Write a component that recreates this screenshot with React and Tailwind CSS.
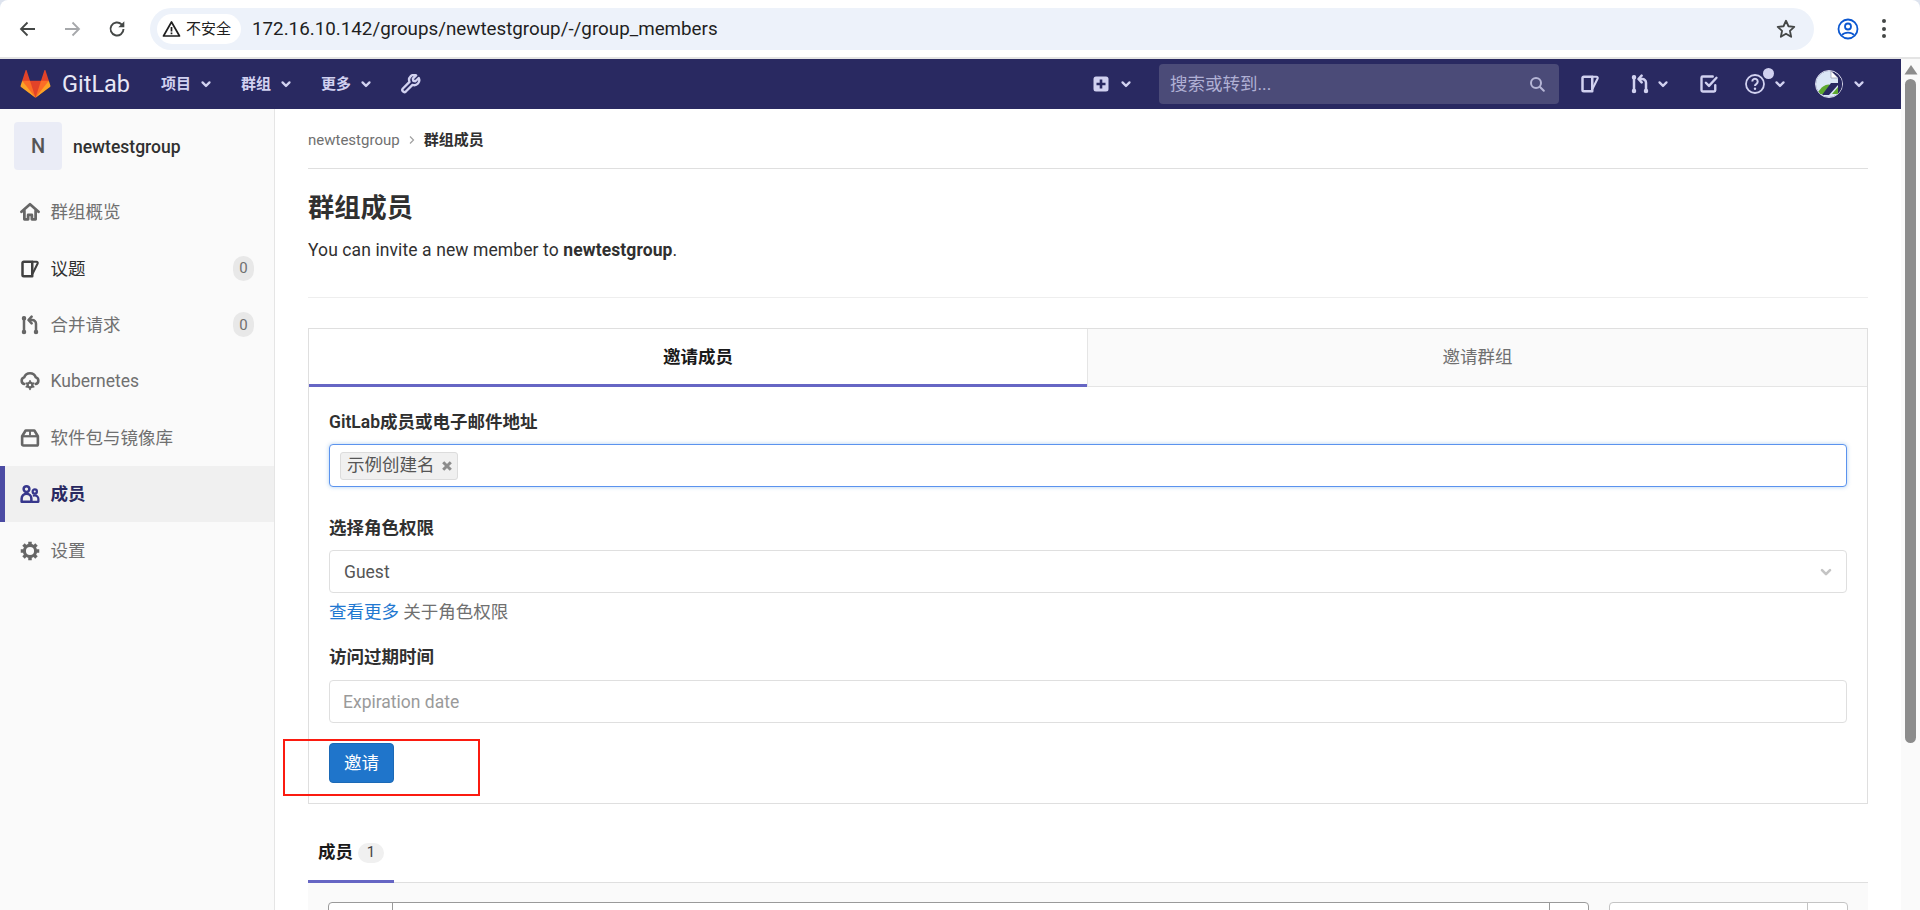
import React from "react";

const FONT = "font-['Roboto','Noto_Sans_CJK_SC',sans-serif]";

function Chevron({ className = "", size = 16 }) {
  return (
    <svg width={size} height={size} viewBox="0 0 16 16" className={className} fill="none" stroke="currentColor" strokeWidth="2.6" strokeLinecap="round" strokeLinejoin="round">
      <path d="M4 6.200 8 10.200 12 6.200" />
    </svg>
  );
}

function Tanuki() {
  return (
    <svg width="31" height="30" viewBox="0 0 36 36">
      <path fill="#e24329" d="M2 14l9.380 9v-9l-4-12.280c-.205-.632-1.176-.632-1.380 0z" />
      <path fill="#e24329" d="M34 14l-9.380 9v-9l4-12.280c.205-.632 1.176-.632 1.380 0z" />
      <path fill="#e24329" d="M18,34.380 3,14 33,14 Z" />
      <path fill="#fc6d26" d="M18,34.380 11.380,14 2,14 6,25Z" />
      <path fill="#fc6d26" d="M18,34.380 24.620,14 34,14 30,25Z" />
      <path fill="#fca326" d="M2 14L.1 20.160c-.18.565 0 1.200.5 1.560l17.420 12.660z" />
      <path fill="#fca326" d="M34 14l1.900 6.160c.18.565 0 1.200-.5 1.560L18 34.380z" />
    </svg>
  );
}

function IssuesIcon({ size = 20, className = "" }) {
  return (
    <svg width={size} height={size} viewBox="0 0 16 16" className={className} fill="none" stroke="currentColor" strokeWidth="2" strokeLinejoin="round" strokeLinecap="round">
      <path d="M3 2.200h6.800v11.600H3a1 1 0 0 1-1-1V3.200a1 1 0 0 1 1-1z" />
      <path d="M10 2.200h3.200a1 1 0 0 1 .9 1.400L10.200 11.500" strokeWidth="1.700" />
    </svg>
  );
}

function MergeIcon({ size = 20, className = "" }) {
  return (
    <svg width={size} height={size} viewBox="0 0 16 16" className={className} fill="none" stroke="currentColor" strokeWidth="2" strokeLinecap="round" strokeLinejoin="round">
      <circle cx="3.200" cy="2.500" r="1.300" fill="currentColor" strokeWidth="1" />
      <circle cx="3.200" cy="13.500" r="1.300" fill="currentColor" strokeWidth="1" />
      <circle cx="12.800" cy="13.500" r="1.300" fill="currentColor" strokeWidth="1" />
      <path d="M3.200 3v10" />
      <path d="M12.800 13V7A3 3 0 0 0 9.800 4H7.500" />
      <path d="M9.300 1.300 6.800 4l2.500 2.700" />
    </svg>
  );
}

function HomeIcon() {
  return (
    <svg width="20" height="20" viewBox="0 0 16 16" fill="none" stroke="currentColor" strokeWidth="2.200" strokeLinejoin="round" strokeLinecap="round">
      <path d="M1.200 7.800 8 1.800l6.800 6" />
      <path d="M3.500 7V13.800h3V10.300h3v3.500h3V7" />
    </svg>
  );
}

function KubeIcon() {
  return (
    <svg width="20" height="20" viewBox="0 0 16 16" fill="none" stroke="currentColor" strokeWidth="2.100" strokeLinejoin="round" strokeLinecap="round">
      <path d="M3.400 10.400A2.800 2.800 0 0 1 3.400 5 4.900 4.900 0 0 1 12.600 5a2.800 2.800 0 0 1 0 5.400" />
      <circle cx="8" cy="11.200" r="1.900" strokeWidth="1.900" />
      <path d="M8 7.800v1M8 13.600v1M5 9.700l.8.5M10.200 12.200l.8.5M5 12.700l.8-.5M10.200 10.200l.8-.5" strokeWidth="1.400" />
    </svg>
  );
}

function PackageIcon() {
  return (
    <svg width="20" height="20" viewBox="0 0 16 16" fill="none" stroke="currentColor" strokeWidth="2.100" strokeLinejoin="round">
      <path d="M4.500 2h7l2.800 4.600V13a1 1 0 0 1-1 1H2.700a1 1 0 0 1-1-1V6.600z" />
      <path d="M1.900 6.600h12.200" strokeWidth="1.800" />
      <path d="M8 2v4" strokeWidth="1.500" />
    </svg>
  );
}

function MembersIcon() {
  return (
    <svg width="20" height="20" viewBox="0 0 16 16" fill="none" stroke="currentColor" strokeWidth="2" strokeLinejoin="round">
      <circle cx="5.200" cy="4" r="2.300" />
      <circle cx="11.800" cy="6" r="1.700" strokeWidth="1.800" />
      <path d="M1.300 14.200v-2.500a3.900 3.900 0 0 1 7.800 0v2.500z" />
      <path d="M10.300 9.400c.5-.2 1-.3 1.500-.3a2.900 2.900 0 0 1 2.900 2.900v2.200H9.500" strokeWidth="1.800" />
    </svg>
  );
}

function GearIcon() {
  return (
    <svg width="20" height="20" viewBox="0 0 16 16" fill="none" stroke="currentColor">
      <circle cx="8" cy="8" r="4.500" strokeWidth="2.500" />
      <path d="M8 .6v2.400M8 13v2.400M.6 8H3M13 8h2.400M2.800 2.800l1.700 1.700M11.500 11.500l1.700 1.700M2.800 13.200l1.700-1.700M11.500 4.500l1.700-1.700" strokeWidth="2.800" />
    </svg>
  );
}

function SideItem({ icon, label, badge, active, hover }) {
  const tone = active
    ? "bg-[#f0f0f0] border-l-[5px] border-[#4b4ba3] pl-[15px] text-[#292961] font-bold"
    : hover
      ? "pl-[20px] text-[#303030]"
      : "pl-[20px] text-[#707070]";
  const iconTone = active ? "text-[#37378c]" : hover ? "text-[#404040]" : "text-[#666666]";
  return (
    <div className={`h-[56.400px] flex items-center pr-[20px] ${tone}`}>
      <span className={`w-[20px] h-[20px] flex ${iconTone}`}>{icon}</span>
      <span className="ml-[10.500px] text-[17.500px] leading-[24px]">{label}</span>
      {badge !== undefined && (
        <span className="ml-auto w-[21px] h-[25px] rounded-full bg-[#e8e8e8] text-[#707070] text-[15px] flex items-center justify-center">{badge}</span>
      )}
    </div>
  );
}

function Sidebar() {
  return (
    <aside className="w-[275px] shrink-0 bg-[#fafafa] border-r border-[#e5e5e5] h-[801px]">
      <div className="h-[75px] pl-[14px] pt-[13px] flex items-start">
        <div className="w-[48px] h-[48px] rounded-[4px] bg-[#eaecf6] text-[#555555] text-[20px] font-medium flex items-center justify-center">N</div>
        <div className="ml-[11px] mt-[13px] text-[17.500px] leading-[24px] font-medium text-[#303030]">newtestgroup</div>
      </div>
      <div>
        <SideItem icon={<HomeIcon />} label="群组概览" />
        <SideItem icon={<IssuesIcon />} label="议题" badge="0" hover />
        <SideItem icon={<MergeIcon />} label="合并请求" badge="0" />
        <SideItem icon={<KubeIcon />} label="Kubernetes" />
        <SideItem icon={<PackageIcon />} label="软件包与镜像库" />
        <SideItem icon={<MembersIcon />} label="成员" active />
        <SideItem icon={<GearIcon />} label="设置" />
      </div>
    </aside>
  );
}

function BrowserBar() {
  return (
    <div className="h-[59px] bg-white border-b-2 border-[#e4e4e4] flex items-start relative rounded-t-[8px]">
      <div className="w-[150px] h-[58px] flex items-center text-[#444746]">
        <svg width="20" height="20" viewBox="0 0 20 20" className="ml-[18px]" fill="none" stroke="currentColor" strokeWidth="1.800"><path d="M17 10H3.500M9.500 3.500 3 10l6.500 6.500" /></svg>
        <svg width="20" height="20" viewBox="0 0 20 20" className="ml-[24px] text-[#a6a8ab]" fill="none" stroke="currentColor" strokeWidth="1.800"><path d="M3 10h13.500M10.500 3.500 17 10l-6.500 6.500" /></svg>
        <svg width="20" height="20" viewBox="0 0 20 20" className="ml-[25px]" fill="none" stroke="currentColor" strokeWidth="1.900"><path d="M16.500 10a6.500 6.500 0 1 1-1.900-4.600L16.500 7.300" /><path d="M17.300 2.300v6h-6z" fill="currentColor" stroke="none" /></svg>
      </div>
      <div className="mt-[8px] w-[1664px] h-[42px] rounded-full bg-[#edf2fa] flex items-center pl-[7px] relative">
        <div className="w-[84px] h-[30px] rounded-full bg-white flex items-center pl-[5px] text-[#1f1f1f]">
          <svg width="19" height="18" viewBox="0 0 19 18" fill="none" stroke="currentColor" strokeWidth="1.700" strokeLinejoin="round"><path d="M9.500 2 17.500 16H1.500z" /><path d="M9.500 7v4.500M9.500 12.500v1.700" /></svg>
          <span className="ml-[5px] text-[15px] leading-[20px]">不安全</span>
        </div>
        <div className="ml-[11px] text-[18.800px] text-[#1f1f1f] leading-[24px]">172.16.10.142/groups/newtestgroup/-/group_members</div>
        <svg width="22" height="22" viewBox="0 0 24 24" className="absolute right-[17px] top-[10px] text-[#444746]" fill="none" stroke="currentColor" strokeWidth="2" strokeLinejoin="round"><path d="M12 3l2.700 6 6.300.7-4.700 4.300 1.300 6.500L12 17.200 6.400 20.500 7.700 14 3 9.700 9.300 9z" /></svg>
      </div>
      <svg width="22" height="22" viewBox="0 0 22 22" className="ml-[23px] mt-[18px] text-[#0b57d0]" fill="none" stroke="currentColor" strokeWidth="1.800"><circle cx="11" cy="11" r="9.500" /><circle cx="11" cy="8.500" r="3" /><path d="M5 17a7 5 0 0 1 12 0" /></svg>
      <div className="ml-[23px] mt-[19px] flex flex-col gap-[3.500px]">
        <span className="w-[4px] h-[4px] rounded-full bg-[#444746]" />
        <span className="w-[4px] h-[4px] rounded-full bg-[#444746]" />
        <span className="w-[4px] h-[4px] rounded-full bg-[#444746]" />
      </div>
    </div>
  );
}

function NavMenu({ label, className = "" }) {
  return (
    <div className={`flex items-center text-[#d1d1f0] ${className}`}>
      <span className="w-[30px] whitespace-nowrap text-[15px] font-bold leading-[20px]">{label}</span>
      <Chevron className="ml-[8px]" size={14} />
    </div>
  );
}

function TopNav() {
  return (
    <div className="h-[50px] bg-[#292961] flex items-center text-[#d1d1f0]">
      <div className="ml-[20px] flex items-center">
        <Tanuki />
        <span className="ml-[11px] w-[64px] text-[23.500px] leading-[28px] text-[#e8e8f6]">GitLab</span>
      </div>
      <NavMenu label="项目" className="ml-[35px]" />
      <NavMenu label="群组" className="ml-[28px]" />
      <NavMenu label="更多" className="ml-[28px]" />
      <svg width="20" height="20" viewBox="0 0 16 16" className="ml-[28px]" fill="none" stroke="currentColor" strokeWidth="1.900" strokeLinejoin="round"><path d="M14.200 3.200 11.500 5.800 9.800 5.400 9.500 3.700 12.100 1.100A4 4 0 0 0 6.800 6.300L1.500 11.600a1.700 1.700 0 0 0 2.400 2.400L9.200 8.700a4 4 0 0 0 5-5.500z" /></svg>

      <svg width="16" height="16" viewBox="0 0 16 16" className="ml-[672px]"><rect x="0.500" y="0.500" width="15" height="15" rx="2.500" fill="#d1d1f0" /><path d="M8 3.500v9M3.500 8h9" stroke="#292961" strokeWidth="2.600" /></svg>
      <Chevron className="ml-[10px]" size={14} />
      <div className="ml-[26px] w-[400px] h-[40px] rounded-[4px] bg-[#4b4b78] flex items-center pl-[11px] pr-[14px]">
        <span className="text-[17.500px] text-[#b0b0d4] leading-[24px]">搜索或转到...</span>
        <svg width="16" height="16" viewBox="0 0 16 16" className="ml-auto text-[#b6b6d6]" fill="none" stroke="currentColor" strokeWidth="2"><circle cx="7" cy="7" r="5" /><path d="M11 11l3.800 3.800" strokeLinecap="round" /></svg>
      </div>
      <IssuesIcon className="ml-[21px]" size={20} />
      <MergeIcon className="ml-[30px]" size={20} />
      <Chevron className="ml-[6px]" size={14} />
      <svg width="20" height="20" viewBox="0 0 16 16" className="ml-[29px]" fill="none" stroke="currentColor" strokeWidth="1.900" strokeLinecap="round" strokeLinejoin="round"><path d="M13 9v4a1 1 0 0 1-1 1H3a1 1 0 0 1-1-1V3a1 1 0 0 1 1-1h8" /><path d="M5.500 7 8 9.500 14 3" /></svg>
      <div className="relative ml-[26px] w-[20px] h-[20px]">
        <svg width="20" height="20" viewBox="0 0 20 20" fill="none" stroke="currentColor" strokeWidth="1.800"><circle cx="10" cy="10" r="9" /><path d="M7.300 7.500a2.700 2.700 0 1 1 4.200 2.300c-1 .6-1.500 1.100-1.500 2.200" strokeWidth="2" /><circle cx="10" cy="14.800" r="1.200" fill="currentColor" stroke="none" /></svg>
        <span className="absolute w-[11px] h-[11px] rounded-full bg-[#d1d1f0] left-[18px] top-[-6px]" />
      </div>
      <Chevron className="ml-[8px]" size={14} />
      <div className="ml-[28px] w-[28px] h-[28px] rounded-full border border-[#dcdcee] overflow-hidden">
        <svg width="26" height="26" viewBox="0 0 26 26" className="block">
          <path d="M0 0h15l7 7v19H0z" fill="#dbe7f6" />
          <path d="M15 0v7h7z" fill="#ffffff" stroke="#8a8aa0" strokeWidth="0.600" />
          <path d="M2 21C6 15 11 12 15 14l-6 9H2z" fill="#5ea92f" />
          <path d="M16 23l6-7v7z" fill="#5ea92f" />
          <path d="M15 12h7v2L13 24H6z" fill="#292961" />
          <path d="M22 7h4v19h-4z" fill="#292961" />
        </svg>
      </div>
      <Chevron className="ml-[9px]" size={14} />
    </div>
  );
}

function Field({ className = "", children }) {
  return <div className={`h-[43px] rounded-[4px] border border-[#dfdfdf] bg-white flex items-center ${className}`}>{children}</div>;
}

function Label({ className = "", children }) {
  return <div className={`text-[17.500px] leading-[24px] font-semibold text-[#303030] ${className}`}>{children}</div>;
}

function InviteCard() {
  return (
    <div className="mt-[30px] border border-[#dfdfdf] bg-white">
      <div className="flex h-[58px]">
        <div className="w-[778px] pt-[1px] border-b-[3px] border-[#6666c4] flex items-center justify-center text-[17.500px] font-semibold text-[#1a1a1a]">邀请成员</div>
        <div className="flex-1 bg-[#fafafa] border-l border-b border-[#e5e5e5] flex items-center justify-center text-[17.500px] text-[#707070]">邀请群组</div>
      </div>
      <div className="px-[20px] pb-[20px]">
        <Label className="mt-[23px]">GitLab成员或电子邮件地址</Label>
        <div className="mt-[10px] h-[43px] rounded-[4px] border border-[#5b93ee] shadow-[0_0_4px_rgba(31,120,209,0.35)] bg-white flex items-center pl-[10px]">
          <div className="h-[28px] w-[118px] rounded-[3px] border border-[#dcdcdc] bg-[#f0f0f0] flex items-center pl-[6px] text-[17.500px] text-[#555555]">
            <span>示例创建名</span>
            <svg width="10" height="10" viewBox="0 0 10 10" className="ml-[7px] text-[#8c8c8c]" stroke="currentColor" strokeWidth="3"><path d="M1.200 1.200l7.600 7.600M8.800 1.200 1.200 8.800" /></svg>
          </div>
        </div>
        <Label className="mt-[29px]">选择角色权限</Label>
        <Field className="mt-[10px] pt-[1px] pl-[14px] pr-[12px] text-[17.500px] text-[#555555]">
          <span>Guest</span>
          <Chevron className="ml-auto text-[#c4c4c4]" size={16} />
        </Field>
        <div className="mt-[7px] text-[17.500px] leading-[24px] text-[#707070]">
          <span className="text-[#1f78d1]">查看更多</span> 关于角色权限
        </div>
        <Label className="mt-[21px]">访问过期时间</Label>
        <Field className="mt-[11px] pt-[2px] pl-[13px] text-[17.500px] text-[#9a9a9a]">Expiration date</Field>
        <button className="mt-[20px] block w-[65px] h-[40px] rounded-[4px] bg-[#1f75cb] border border-[#1b69b6] text-white text-[17.500px]">邀请</button>
      </div>
    </div>
  );
}

function Main() {
  return (
    <main className="flex-1 min-w-0 pl-[33px] pr-[33px] bg-white h-[801px] overflow-hidden">
      <div className="h-[60px] border-b border-[#dfdfdf] flex items-center pt-[3px] text-[15px]">
        <span className="text-[#707070]">newtestgroup</span>
        <svg width="8" height="10" viewBox="0 0 8 10" className="mx-[8px] text-[#a0a0a0]" fill="none" stroke="currentColor" strokeWidth="1.200"><path d="M2 1.500 5.500 5 2 8.500" /></svg>
        <span className="font-bold text-[#303030]">群组成员</span>
      </div>
      <h1 className="mt-[23px] text-[26.250px] leading-[32px] font-bold text-[#303030]">群组成员</h1>
      <p className="mt-[13px] text-[17.500px] leading-[26px] tracking-[0.1px] text-[#303030]">
        You can invite a new member to <strong className="font-bold">newtestgroup</strong>.
      </p>
      <div className="mt-[34px] h-px bg-[#eeeeee]" />
      <InviteCard />
      <div className="mt-[21px] h-[58px] border-b border-[#dfdfdf] flex">
        <div className="w-[86px] h-[58px] border-b-[3px] border-[#6666c4] flex items-center pl-[10px]">
          <span className="text-[17.500px] font-bold text-[#1a1a1a]">成员</span>
          <span className="ml-[5px] w-[26px] h-[20px] rounded-full bg-[#f0f0f0] text-[15px] text-[#444444] flex items-center justify-center">1</span>
        </div>
      </div>
      <div className="bg-[#fafafa] h-[30px] pt-[19px] px-[20px] flex">
        <div className="h-[40px] w-[1261px] shrink-0 border border-[#9a9a9a] rounded-[4px] bg-white flex">
          <div className="w-[64px] border-r border-[#9a9a9a]" />
          <div className="ml-auto w-[39px] border-l border-[#9a9a9a]" />
        </div>
        <div className="ml-[20px] h-[40px] w-[239px] shrink-0 border border-[#c4c4c4] rounded-[4px] bg-white flex">
          <div className="ml-auto w-[40px] border-l border-[#c4c4c4]" />
        </div>
      </div>
    </main>
  );
}

function Scrollbar() {
  return (
    <div className="w-[19px] shrink-0 bg-[#fafafa] h-[851px] flex flex-col items-center pt-[6px]">
      <svg width="14" height="10" viewBox="0 0 14 10" className="text-[#8c8c8c]" fill="currentColor"><path d="M7 0l6.500 9.500H.5z" /></svg>
      <div className="mt-[4px] w-[11px] h-[664px] bg-[#8c8c8c] rounded-full" />
    </div>
  );
}

export default function App() {
  return (
    <div className={`relative w-[1920px] h-[910px] overflow-hidden bg-[#dde3ee] ${FONT}`}>
      <BrowserBar />
      <div className="flex">
        <div className="w-[1901px] shrink-0">
          <TopNav />
          <div className="flex">
            <Sidebar />
            <Main />
          </div>
        </div>
        <Scrollbar />
      </div>
      <div className="absolute left-[283px] top-[739px] w-[197px] h-[57px] border-2 border-[#fb1b10] pointer-events-none" />
    </div>
  );
}
